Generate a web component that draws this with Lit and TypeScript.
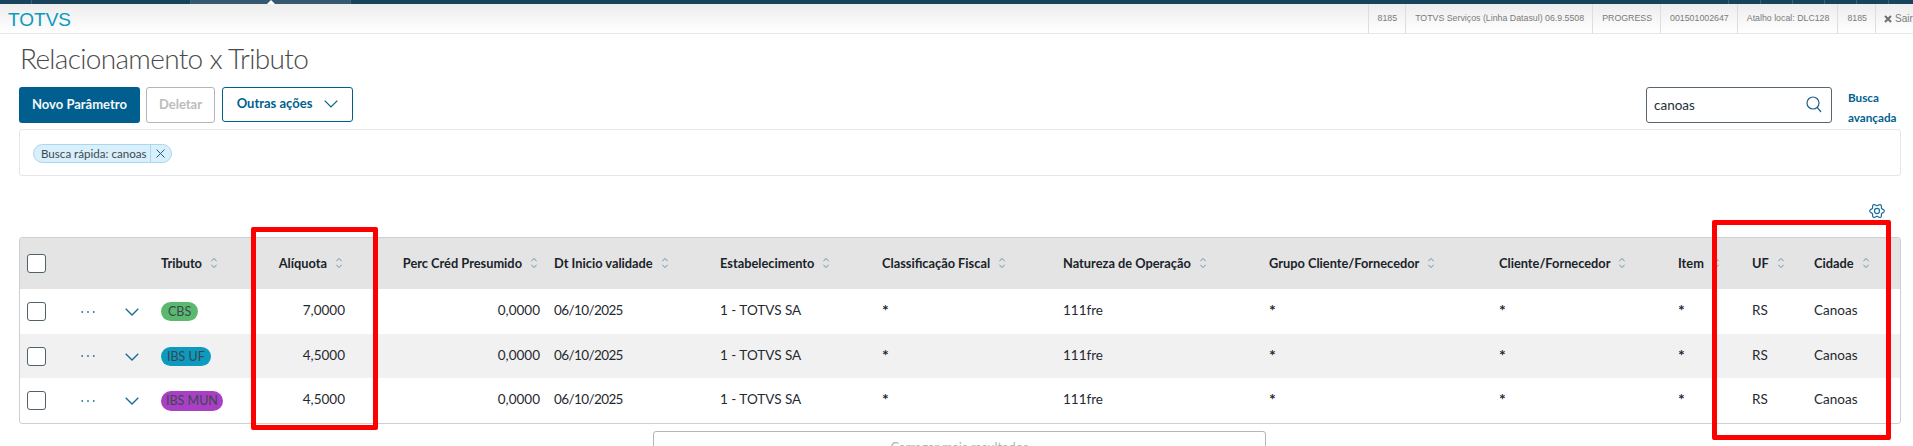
import { LitElement, html, css } from "lit";
import { customElement } from "lit/decorators.js";

const sortIcon = html`<svg class="sort" viewBox="0 0 8 14" width="8" height="14" aria-hidden="true">
  <path d="M1.4 5.2 4 2.4l2.6 2.8M1.4 8.8 4 11.6l2.6-2.8" fill="none" stroke="#6a93ab" stroke-width="1"/>
</svg>`;

const chevron = (w: number, h: number, color: string, sw = 1.4) => html`<svg width=${w} height=${h} viewBox="0 0 14 8" aria-hidden="true">
  <path d="M.7.7 7 7l6.3-6.3" fill="none" stroke=${color} stroke-width=${sw}/>
</svg>`;

const dots = html`<svg width="14" height="4" viewBox="0 0 14 4" aria-hidden="true">
  <circle cx="1.2" cy="2" r=".9" fill="#2c739c"/><circle cx="7" cy="2" r=".9" fill="#2c739c"/><circle cx="12.8" cy="2" r=".9" fill="#2c739c"/>
</svg>`;

// six-lobed gear outline, sampled from a polar curve
const gearPath = (() => {
  const pts: string[] = [];
  for (let i = 0; i < 96; i++) {
    const a = (i / 96) * Math.PI * 2;
    const r = 9.4 + 1.5 * Math.cos(6 * a);
    pts.push(`${(12 + r * Math.cos(a)).toFixed(2)} ${(12 + r * Math.sin(a)).toFixed(2)}`);
  }
  return `M${pts.join("L")}Z`;
})();

const columns = [
  { label: "Tributo", key: "tag" },
  { label: "Alíquota", key: "aliq", num: true },
  { label: "Perc Créd Presumido", key: "perc", num: true },
  { label: "Dt Inicio validade", key: "dt" },
  { label: "Estabelecimento", key: "est" },
  { label: "Classificação Fiscal", key: "cla" },
  { label: "Natureza de Operação", key: "nat" },
  { label: "Grupo Cliente/Fornecedor", key: "gru" },
  { label: "Cliente/Fornecedor", key: "cli" },
  { label: "Item", key: "item" },
  { label: "UF", key: "uf" },
  { label: "Cidade", key: "cid" },
];

const common = { perc: "0,0000", dt: "06/10/2025", est: "1 - TOTVS SA", cla: "*", nat: "111fre", gru: "*", cli: "*", item: "*", uf: "RS", cid: "Canoas" };
const rows: Array<Record<string, string>> = [
  { tag: "CBS", tone: "green", aliq: "7,0000", ...common },
  { tag: "IBS UF", tone: "blue", aliq: "4,5000", ...common },
  { tag: "IBS MUN", tone: "purple", aliq: "4,5000", ...common },
];

const topInfo = ["8185", "TOTVS Serviços (Linha Datasul) 06.9.5508", "PROGRESS", "001501002647", "Atalho local: DLC128", "8185"];

@customElement("app-root")
export class AppRoot extends LitElement {
  static styles = css`
    :host { display: block; position: relative; width: 1913px; height: 446px; overflow: hidden; background: #fff; font-family: Lato, "Noto Sans", sans-serif; color: #1f2a30; }
    .tabs { height: 4px; background: #17445c; display: grid; grid-template-columns: 32px 159px 160px 1fr repeat(5, 32px) 24px; }
    .tabs span { border-right: 1px solid #3a6377; position: relative; }
    .tabs .active { background: #33586f; }
    .tabs .active::after { content: ""; position: absolute; left: 76px; top: 0; border: 4px solid transparent; border-top: 0; border-bottom-color: #fff; }
    .tabs .plain { border-right: 0; }
    .brandbar { height: 30px; box-sizing: border-box; border-bottom: 1px solid #e6e6e6; background: linear-gradient(#ededed, #fff); display: flex; justify-content: space-between; font-family: "Liberation Sans", Arial, sans-serif; }
    .logo { font-size: 19px; color: #0c9abe; padding: 5px 0 0 8px; line-height: 21px; }
    .info { display: flex; font-size: 8.8px; color: #7a7a7a; line-height: 28px; white-space: nowrap; }
    .info span { padding: 0 8px 0 9px; border-left: 1px solid #dedede; }
    .info .out { padding: 0 0 0 8px; width: 38px; box-sizing: border-box; display: flex; align-items: center; gap: 3px; overflow: hidden; font-size: 10px; }
    h1 { margin: 0; font-weight: 300; font-size: 28px; line-height: 38px; letter-spacing: -.68px; color: #4a4a4a; padding: 5px 0 0 20px; height: 48px; box-sizing: content-box; }
    .tools { display: flex; align-items: flex-start; padding-left: 19px; height: 42px; }
    .btn { height: 36px; box-sizing: border-box; border-radius: 3px; padding-bottom: 2px; font: 700 13px/1 Lato, "Noto Sans", sans-serif; display: flex; align-items: center; justify-content: center; background: #fff; }
    .primary { width: 121px; background: #005f8f; color: #f3f7f9; }
    .disabled { width: 69px; margin-left: 6px; border: 1px solid #b5b5b5; color: #bcbcbc; }
    .outline { width: 131px; margin-left: 7px; height: 35px; border: 1px solid #005f8f; color: #005f8f; gap: 12px; }
    .search { margin-left: auto; width: 186px; height: 36px; box-sizing: border-box; border: 1px solid #57666e; border-radius: 3px; display: flex; align-items: center; justify-content: space-between; padding: 0 9px 1px 7px; font-size: 13.5px; color: #243038; }
    .search svg { margin-bottom: 1px; }
    .adv { width: 65px; padding-left: 16px; box-sizing: content-box; font-size: 11.7px; font-weight: 700; line-height: 20px; color: #005f8f; }
    .filters { margin-left: 19px; width: 1882px; height: 47px; box-sizing: border-box; border: 1px solid #e6e6e6; border-radius: 3px; padding: 13px 0 0 13px; }
    .filters { padding-top: 12px; }
    .chip { display: inline-flex; height: 19px; box-sizing: border-box; border: 1px solid #a6d8f0; background: #d9effb; border-radius: 10px; font-size: 11.6px; line-height: 17px; color: #3c4a52; }
    .chip b { font-weight: 400; padding: 0 3px 0 7px; border-right: 1px solid #a6d8f0; }
    .chip i { width: 20px; display: flex; align-items: center; justify-content: center; }
    .gear { display: flex; justify-content: flex-end; height: 61px; box-sizing: border-box; padding: 27px 28px 0 0; }
    .table { margin-left: 19px; width: 1882px; height: 187px; box-sizing: border-box; border: 1px solid #cfcfcf; border-radius: 3px; overflow: hidden; }
    .row { display: grid; grid-template-columns: 54px 44px 36px 117px 81px 195px 166px 162px 181px 206px 230px 179px 74px 62px 1fr; align-items: center; font-size: 13.5px; color: #1f2a30; white-space: nowrap; }
    .head { height: 51px; background: #e4e4e4; font-weight: 700; font-size: 12.8px; color: #1a2329; }
    .body { height: 45px; }
    .body.mid { height: 44px; background: #f1f1f1; }
    .cell { padding: 0 7px; display: flex; align-items: center; min-width: 0; }
    .head .cell { padding-bottom: 1px; }
    .body .cell { padding-bottom: 3px; }
    .body .cell.tagcell { padding-bottom: 0; }
    .head .num { padding-right: 9px; }
    .num { justify-content: flex-end; }
    .sort { margin-left: 8px; flex: none; }
    .date { letter-spacing: -.6px; }
    .star { font-size: 16px; font-weight: 700; line-height: 16px; }
    .check { width: 19px; height: 19px; box-sizing: border-box; border: 1.5px solid #50616a; border-radius: 3px; margin-left: 7px; background: #fff; }
    .dots { padding-left: 7px; display: flex; }
    .chev { padding-left: 7px; display: flex; padding-top: 1px; }
    .tag { height: 19px; padding: 0 5px; border-radius: 10px; font-size: 12.5px; line-height: 19px; color: #3a484f; }
    .green { background: #5bb96f; padding: 0 7px; }
    .blue { background: #0d9abf; padding: 0 6px; }
    .purple { background: #a93fc4; height: 20px; }
    .more { margin: 7px 0 0 653px; width: 613px; height: 40px; box-sizing: border-box; border: 1px solid #b5b5b5; border-radius: 3px; text-align: center; font-weight: 400; font-size: 12.8px; line-height: 31px; color: #b4b4b4; }
    .mark { position: absolute; box-sizing: border-box; border: 5px solid #ff0000; border-radius: 2px; pointer-events: none; }
    .m1 { left: 251px; top: 227px; width: 127px; height: 203px; }
    .m2 { left: 1712px; top: 220px; width: 179px; height: 220px; }
  `;

  private value(key: string, text: string) {
    if (text === "*") return html`<span class="star">*</span>`;
    if (key === "dt") return html`<span class="date">${text}</span>`;
    return text;
  }

  render() {
    return html`
      <div class="tabs">
        <span></span><span></span><span class="active"></span><span></span>
        <span></span><span></span><span></span><span></span><span></span><span class="plain"></span>
      </div>
      <div class="brandbar">
        <div class="logo">TOTVS</div>
        <div class="info">
          ${topInfo.map((t) => html`<span>${t}</span>`)}
          <span class="out"><svg width="8" height="8" viewBox="0 0 8 8" aria-hidden="true"><path d="M1 1l6 6M7 1 1 7" stroke="#6f6f6f" stroke-width="2"/></svg>Sair</span>
        </div>
      </div>
      <h1>Relacionamento x Tributo</h1>
      <div class="tools">
        <div class="btn primary">Novo Parâmetro</div>
        <div class="btn disabled">Deletar</div>
        <div class="btn outline">Outras ações ${chevron(14, 8, "#005f8f", 1.2)}</div>
        <div class="search">canoas
          <svg width="16" height="17" viewBox="0 0 16 17" aria-hidden="true"><circle cx="7" cy="7" r="6" fill="none" stroke="#1d5f85" stroke-width="1.2"/><path d="M11.2 11.4 15 16" stroke="#1d5f85" stroke-width="1.2"/></svg>
        </div>
        <div class="adv">Busca<br />avançada</div>
      </div>
      <div class="filters">
        <div class="chip"><b>Busca rápida: canoas</b><i><svg width="9" height="9" viewBox="0 0 9 9" aria-hidden="true"><path d="M.5.5l8 8M8.5.5l-8 8" stroke="#1d5f85" stroke-width="1"/></svg></i></div>
      </div>
      <div class="gear">
        <svg width="16" height="16" viewBox="0 0 24 24" aria-hidden="true" fill="none" stroke="#1c6c99" stroke-width="1.8">
          <circle cx="12" cy="12" r="3.8"/>
          <path d=${gearPath}/>
        </svg>
      </div>
      <div class="table">
        <div class="row head">
          <div class="check"></div><div></div><div></div>
          ${columns.map((c) => html`<div class="cell ${c.num ? "num" : ""}">${c.label}${sortIcon}</div>`)}
        </div>
        ${rows.map((r, i) => html`
          <div class="row body ${i === 1 ? "mid" : ""}">
            <div class="check"></div>
            <div class="dots">${dots}</div>
            <div class="chev">${chevron(14, 8, "#1c6c99")}</div>
            ${columns.map((c) => c.key === "tag"
              ? html`<div class="cell tagcell"><span class="tag ${r.tone}">${r.tag}</span></div>`
              : html`<div class="cell ${c.num ? "num" : ""}">${this.value(c.key, r[c.key])}</div>`)}
          </div>`)}
      </div>
      <div class="more">Carregar mais resultados</div>
      <div class="mark m1"></div>
      <div class="mark m2"></div>
    `;
  }
}
